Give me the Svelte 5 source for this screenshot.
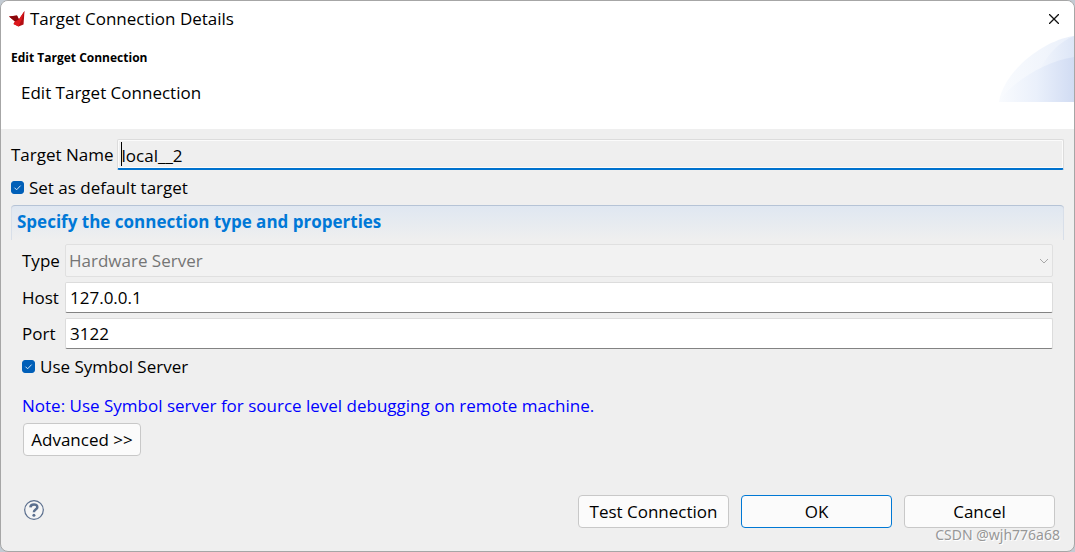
<script lang="ts">
  let targetName = $state('local__2')
  let isDefault = $state(true)
  let type = $state('Hardware Server')
  let host = $state('127.0.0.1')
  let port = $state('3122')
  let useSymbolServer = $state(true)
</script>

{#snippet tick()}
  <svg class="tick" viewBox="0 0 13 13" aria-hidden="true">
    <path d="M3.5 6.7 5.6 8.8 9.6 4.6" fill="none" stroke="#d6e8f8" />
  </svg>
{/snippet}

<div class="dialog" role="dialog" aria-labelledby="dialog-title">
  <header class="banner">
    <div class="titlebar">
      <svg class="logo" width="16" height="16" viewBox="0 0 16 16" aria-hidden="true">
        <path d="M0 5.5 8 4.5 10 8.5 9.5 15.5 4.5 13 6 10.5z" fill="#c81217" />
        <path d="M0 5.5 8 4.5 10 8.5 6 10.5z" fill="#8a070b" />
        <path d="M15.5 0 14.5 13.5 9.5 15.5 9.5 9z" fill="#b30d12" />
        <path d="M15.5 0 9.5 9 6 10.5 4.5 13 9.5 15.5 12.5 9z" fill="#dd171c" />
      </svg>
      <span class="title" id="dialog-title">Target Connection Details</span>
      <button class="close" type="button" aria-label="Close">
        <svg width="10" height="10" viewBox="0 0 10 10">
          <path d="M0 0 10 10M10 0 0 10" stroke="#111" stroke-width="1.3" />
        </svg>
      </button>
    </div>
    <h1>Edit Target Connection</h1>
    <p class="description">Edit Target Connection</p>
    <svg class="swoosh" width="75" height="66" viewBox="0 0 75 66" aria-hidden="true">
      <defs>
        <linearGradient id="outer">
          <stop offset="0" stop-color="#f9fbfe" />
          <stop offset=".6" stop-color="#f1f5fc" />
          <stop offset="1" stop-color="#e9effa" />
        </linearGradient>
        <linearGradient id="middle">
          <stop offset="0" stop-color="#f1f5fc" />
          <stop offset="1" stop-color="#dde6f7" />
        </linearGradient>
        <linearGradient id="inner">
          <stop offset="0" stop-color="#f9fbfe" />
          <stop offset=".5" stop-color="#eaf0fb" />
          <stop offset="1" stop-color="#d1dcf3" />
        </linearGradient>
      </defs>
      <path d="M0 66C4 36 44 4 75 0v66z" fill="url(#outer)" />
      <path d="M75 0C62 5 50 16 41 33L75 30z" fill="url(#middle)" />
      <path d="M0 66C10 48 46 25 75 21v45z" fill="url(#inner)" />
    </svg>
  </header>

  <main>
    <div class="name-row">
      <label for="target-name">Target Name</label>
      <div class="name-field">
        <input id="target-name" type="text" bind:value={targetName} />
        <span class="caret"></span>
      </div>
    </div>

    <label class="check">
      <span class="box">
        <input type="checkbox" bind:checked={isDefault} />
        {#if isDefault}{@render tick()}{/if}
      </span>
      Set as default target
    </label>

    <section>
      <h2>Specify the connection type and properties</h2>
      <div class="fields">
        <label for="type">Type</label>
        <div class="combo">
          <select id="type" bind:value={type} disabled>
            <option>Hardware Server</option>
          </select>
          <svg class="chevron" width="10" height="6" viewBox="0 0 10 6" aria-hidden="true">
            <path d="M1 1l4 4 4-4" fill="none" stroke="#a8a8a8" />
          </svg>
        </div>
        <label for="host">Host</label>
        <input id="host" type="text" bind:value={host} />
        <label for="port">Port</label>
        <input id="port" type="text" bind:value={port} />
      </div>

      <label class="check indented">
        <span class="box">
          <input type="checkbox" bind:checked={useSymbolServer} />
          {#if useSymbolServer}{@render tick()}{/if}
        </span>
        Use Symbol Server
      </label>

      <p class="note">Note: Use Symbol server for source level debugging on remote machine.</p>
      <button class="btn advanced" type="button">Advanced &gt;&gt;</button>
    </section>
  </main>

  <footer>
    <button class="help" type="button" aria-label="Help">
      <svg width="20" height="20" viewBox="0 0 20 20">
        <circle cx="10" cy="10" r="9.3" fill="#f5f5f5" stroke="#5b6f8e" stroke-width="1.2" />
        <path d="M6.4 7.4C6.6 3.4 13.4 3.5 13.3 7.2c0 2.4-3.4 2.3-3.4 5" fill="none" stroke="#5b6f8e" stroke-width="2.5" />
        <circle cx="9.9" cy="15.2" r="1.5" fill="#5b6f8e" />
      </svg>
    </button>
    <div class="actions">
      <button class="btn" type="button">Test Connection</button>
      <button class="btn primary" type="button">OK</button>
      <button class="btn" type="button">Cancel</button>
    </div>
    <span class="watermark">CSDN @wjh776a68</span>
  </footer>
</div>

<style>
  :global(body) {
    margin: 0;
    background: #c3cbd3;
  }

  .dialog {
    box-sizing: border-box;
    min-height: 100vh;
    display: flex;
    flex-direction: column;
    border: 1px solid #a6a6a6;
    border-radius: 8px;
    overflow: hidden;
    background: #efefef;
    color: #000;
    font: 17px/24px 'Open Sans', 'Segoe UI', sans-serif;
  }

  input,
  select,
  button {
    box-sizing: border-box;
    margin: 0;
    font: inherit;
    color: inherit;
  }

  .banner {
    position: relative;
    height: 128px;
    background: #fff;
  }

  .titlebar {
    display: flex;
    align-items: center;
    height: 35px;
    padding: 0 11px 0 8px;
  }

  .logo {
    margin-right: 5px;
  }

  .title {
    flex: 1;
  }

  .close {
    display: flex;
    padding: 4px;
    border: 0;
    background: none;
  }

  h1 {
    margin: 12px 10px 0;
    font-size: 12px;
    line-height: 20px;
  }

  .description {
    margin: 13px 20px 0;
  }

  .swoosh {
    position: absolute;
    right: 0;
    bottom: 27px;
  }

  main {
    padding: 10px 10px 0;
  }

  .name-row {
    display: flex;
    align-items: center;
    gap: 3px;
  }

  .name-field {
    position: relative;
    flex: 1;
  }

  input[type='text'] {
    display: block;
    width: 100%;
    height: 31px;
    padding: 0 4px;
    border: 1px solid #dcdcdc;
    border-bottom-color: #838383;
    border-radius: 2px;
    background: #fff;
    outline: none;
  }

  .name-field input[type='text'] {
    padding: 2px 4px 0;
    border-bottom: 2px solid #0072ce;
    background: #efefef;
    box-shadow: inset 0 0 0 1px #fbfbfb;
  }

  .caret {
    position: absolute;
    left: 4px;
    top: 3px;
    width: 1px;
    height: 24px;
    background: #000;
  }

  .check {
    display: flex;
    align-items: center;
    gap: 5px;
    height: 35px;
  }

  .box {
    position: relative;
    width: 13px;
    height: 13px;
  }

  .box input {
    display: block;
    appearance: none;
    width: 13px;
    height: 13px;
    border: 1px solid #005fb8;
    border-radius: 3px;
  }

  .box input:checked {
    background: #005fb8;
  }

  .tick {
    position: absolute;
    inset: 0;
    pointer-events: none;
  }

  h2 {
    margin: 0;
    height: 34px;
    padding: 0 6px;
    border-top: 1px solid #b5c3d6;
    border-radius: 4px 4px 0 0;
    background: linear-gradient(#dfe7f1, #efefef);
    box-shadow: inset 1px 0 #d8dfe9, inset -1px 0 #d8dfe9;
    color: #0078d7;
    font-size: 17px;
    line-height: 32px;
  }

  .fields {
    display: grid;
    grid-template-columns: 38px 1fr;
    align-items: center;
    gap: 5px;
    padding: 4px 11px 0;
  }

  .combo {
    position: relative;
  }

  select {
    display: block;
    appearance: none;
    width: 100%;
    height: 33px;
    padding: 0 3px;
    border: 1px solid #e0e0e0;
    border-radius: 2px;
    background: #f2f2f2;
  }

  select:disabled {
    color: #757575;
    opacity: 1;
  }

  .chevron {
    position: absolute;
    right: 4px;
    top: 14px;
    pointer-events: none;
  }

  .indented {
    padding-left: 11px;
  }

  .note {
    margin: 10px 11px 5px;
    color: #00f;
  }

  .btn {
    height: 33px;
    padding: 0 4px;
    border: 1px solid #c8c8c8;
    border-radius: 4px;
    background: #fbfbfb;
  }

  .advanced {
    display: block;
    width: 118px;
    margin-left: 12px;
  }

  footer {
    position: relative;
    display: flex;
    align-items: flex-start;
    justify-content: space-between;
    margin-top: auto;
    padding: 20px 19px 23px;
  }

  .help {
    display: flex;
    padding: 5px 4px;
    border: 0;
    background: none;
  }

  .actions {
    display: flex;
    gap: 12px;
  }

  .actions .btn {
    width: 151px;
  }

  .btn.primary {
    border-color: #0078d4;
  }

  .watermark {
    position: absolute;
    right: 14px;
    bottom: 6px;
    color: #979797;
    font: 14px/20px 'Noto Sans', sans-serif;
    text-shadow: 1px 1px #fff;
  }
</style>
